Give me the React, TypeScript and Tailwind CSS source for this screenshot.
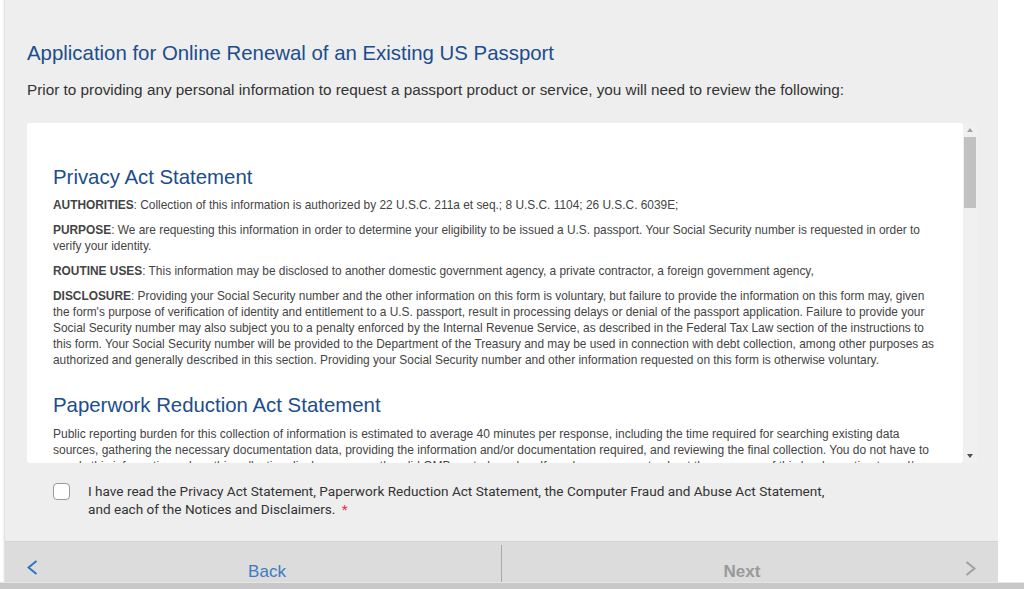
const sans = "font-['Liberation_Sans',Arial,sans-serif]";

const privacy = [
  {
    label: "AUTHORITIES",
    text: "Collection of this information is authorized by 22 U.S.C. 211a et seq.; 8 U.S.C. 1104; 26 U.S.C. 6039E;",
  },
  {
    label: "PURPOSE",
    text: "We are requesting this information in order to determine your eligibility to be issued a U.S. passport. Your Social Security number is requested in order to verify your identity.",
  },
  {
    label: "ROUTINE USES",
    text: "This information may be disclosed to another domestic government agency, a private contractor, a foreign government agency,",
  },
  {
    label: "DISCLOSURE",
    text: "Providing your Social Security number and the other information on this form is voluntary, but failure to provide the information on this form may, given the form's purpose of verification of identity and entitlement to a U.S. passport, result in processing delays or denial of the passport application. Failure to provide your Social Security number may also subject you to a penalty enforced by the Internal Revenue Service, as described in the Federal Tax Law section of the instructions to this form. Your Social Security number will be provided to the Department of the Treasury and may be used in connection with debt collection, among other purposes as authorized and generally described in this section. Providing your Social Security number and other information requested on this form is otherwise voluntary.",
  },
];

const paperwork =
  "Public reporting burden for this collection of information is estimated to average 40 minutes per response, including the time required for searching existing data sources, gathering the necessary documentation data, providing the information and/or documentation required, and reviewing the final collection. You do not have to supply this information unless this collection displays a currently valid OMB control number. If you have comments about the accuracy of this burden estimate and/or recommendations for reducing it, please send them to the U.S. Department of State.";

function Scrollbar() {
  return (
    <div className="w-[14px] flex flex-col items-center bg-[#f0f0f0]">
      <div className="h-[14px] flex items-center justify-center">
        <div className="w-0 h-0 border-l-[3px] border-r-[3px] border-b-[4px] border-l-transparent border-r-transparent border-b-[#a3a3a3]" />
      </div>
      <div className="w-[12px] h-[71px] bg-[#c1c1c1]" />
      <div className="flex-1" />
      <div className="h-[14px] flex items-center justify-center">
        <div className="w-0 h-0 border-l-[3px] border-r-[3px] border-t-[4px] border-l-transparent border-r-transparent border-t-[#505050]" />
      </div>
    </div>
  );
}

function Chevron({ dir, color }: { dir: "left" | "right"; color: string }) {
  return (
    <svg width="11" height="15" viewBox="0 0 11 15" fill="none">
      <polyline
        points={dir === "left" ? "9.5,1 1.5,7.5 9.5,14" : "1.5,1 9.5,7.5 1.5,14"}
        stroke={color}
        strokeWidth="2"
        strokeLinejoin="miter"
      />
    </svg>
  );
}

export default function App() {
  return (
    <div className="w-[1024px] h-[589px] bg-white flex flex-col overflow-hidden">
      <div className="flex flex-1 min-h-0">
        <div className="w-[4px] bg-white" />
        <div className="w-[994px] bg-[#eeeeee] border-l border-[#e2e2e2] shadow-[0_0_2px_rgba(0,0,0,0.15)] flex flex-col">
          <div className="pl-[22px] pr-[22px]">
            <h1 className={`${sans} text-[20.4px] text-[#1c4d8c] leading-[24px] pt-[41px]`}>
              Application for Online Renewal of an Existing US Passport
            </h1>
            <p className={`${sans} text-[15.3px] text-[#333] leading-[20px] mt-[15px]`}>
              Prior to providing any personal information to request a passport product or service, you will need to review the following:
            </p>
          </div>

          <div className="flex ml-[22px] mt-[23px] h-[340px]">
            <div className="w-[936px] bg-white rounded-[3px] overflow-hidden pl-[26px] pr-[22px] pt-[42px]">
              <h2 className={`${sans} text-[20.4px] text-[#1c4d8c] leading-[24px]`}>Privacy Act Statement</h2>
              <div className={`${sans} text-[11.9px] leading-[16px] text-[#444] mt-[8px]`}>
                {privacy.map((p) => (
                  <p key={p.label} className="mb-[9px]">
                    <span className="font-bold">{p.label}</span>: {p.text}
                  </p>
                ))}
              </div>
              <h2 className={`${sans} text-[20.4px] text-[#1c4d8c] leading-[24px] mt-[25px]`}>
                Paperwork Reduction Act Statement
              </h2>
              <p className={`${sans} text-[12px] leading-[16px] text-[#444] mt-[9px]`}>{paperwork}</p>
            </div>
            <Scrollbar />
          </div>

          <div className="flex items-start pl-[48px] pt-[19px] h-[78px]">
            <div className="w-[17px] h-[17px] mt-[1px] bg-white border border-[#9a9a9a] rounded-[4px] shrink-0" />
            <p className="font-['Roboto',sans-serif] text-[13.6px] leading-[18px] text-[#333] ml-[18px]">
              I have read the Privacy Act Statement, Paperwork Reduction Act Statement, the Computer Fraud and Abuse Act Statement,
              <br />
              and each of the Notices and Disclaimers. <span className="text-[#e0314b] ml-[3px]">*</span>
            </p>
          </div>

          <div className="flex flex-1 bg-[#dcdcdc] border-t border-[#d4d4d4]">
            <div className="flex-1 flex items-end relative">
              <div className="absolute left-[22px] bottom-[7px]">
                <Chevron dir="left" color="#2f74c0" />
              </div>
              <span className={`${sans} w-full text-center text-[17px] text-[#3a7bc0] leading-[20px] pl-[28px]`}>Back</span>
            </div>
            <div className="w-px bg-[#a8a8a8] mt-[3px]" />
            <div className="flex-1 flex items-end relative">
              <span className={`${sans} w-full text-center text-[17px] font-bold text-[#999] leading-[20px] pr-[16px]`}>Next</span>
              <div className="absolute right-[22px] bottom-[6px]">
                <Chevron dir="right" color="#a0a0a0" />
              </div>
            </div>
          </div>
        </div>
        <div className="flex-1 bg-white" />
      </div>
      <div className="h-[7px] bg-[#c8c8c8] border-t border-[#e6e6e6]" />
    </div>
  );
}
